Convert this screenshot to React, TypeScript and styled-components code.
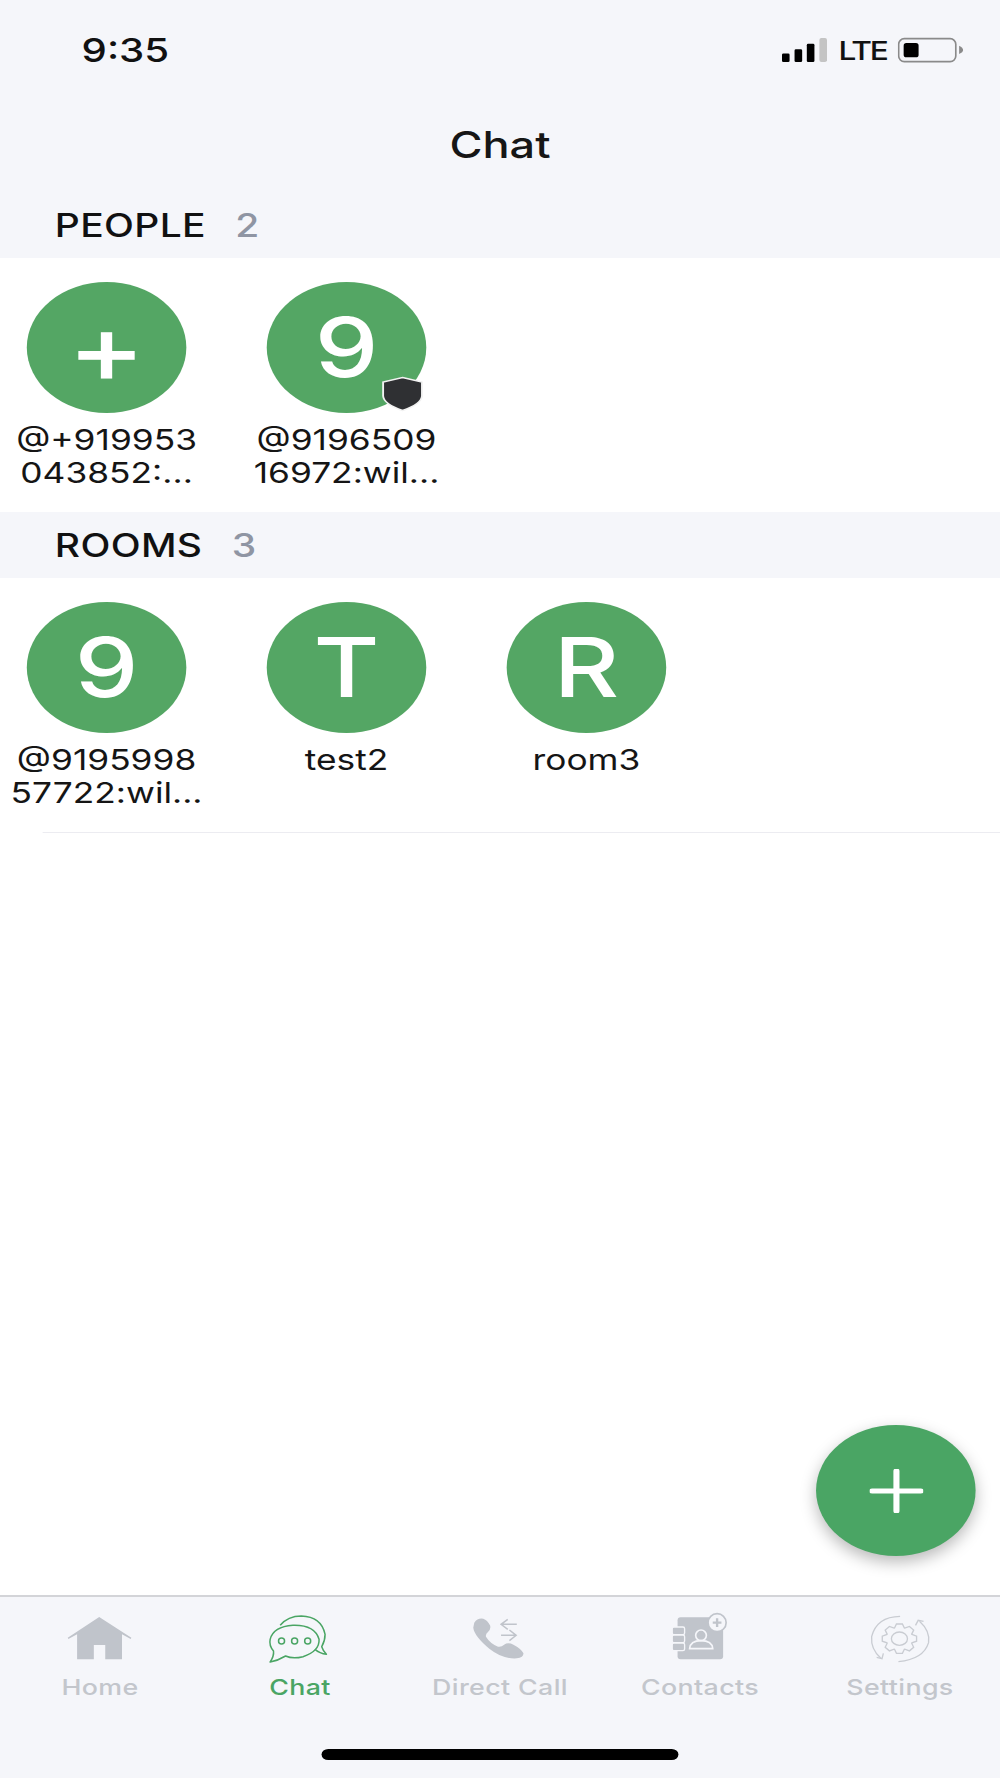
import React from 'react';
import styled, { createGlobalStyle } from 'styled-components';

// The capture is an iPhone screen stretched wider than it is tall: the page is
// laid out at 821px and widened to 1000px so circles and text stretch with it.
const GlobalStyle = createGlobalStyle`
  html, body {
    margin: 0;
    padding: 0;
    overflow: hidden;
    background: #f5f6fa;
  }
`;

const Screen = styled.div`
  width: 821px;
  height: 1778px;
  display: flex;
  flex-direction: column;
  transform: scaleX(1.218);
  transform-origin: 0 0;
  background: #f5f6fa;
  color: #111;
  font-family: Inter, 'Liberation Sans', sans-serif;
`;

const StatusBar = styled.div`
  height: 96px;
  box-sizing: border-box;
  padding: 4px 30px 0 67px;
  display: flex;
  align-items: center;
  justify-content: space-between;
`;

const Clock = styled.span`
  font-size: 33px;
  font-weight: 500;
`;

const StatusIcons = styled.div`
  display: flex;
  align-items: center;
  gap: 9px;
`;

const Lte = styled.span`
  font-size: 26px;
  font-weight: 500;
  letter-spacing: -1.8px;
`;

const NavBar = styled.h1`
  margin: 0;
  height: 96px;
  display: flex;
  align-items: center;
  justify-content: center;
  font-size: 37px;
  font-weight: 500;
  color: #161616;
`;

const SectionHeader = styled.div`
  height: 66px;
  box-sizing: border-box;
  padding-left: 45px;
  display: flex;
  align-items: center;
  gap: 24px;
  font-size: 32px;
  font-weight: 500;
  letter-spacing: 0.3px;
`;

const Count = styled.span`
  color: #8f95a3;
`;

const Row = styled.div`
  height: 254px;
  box-sizing: border-box;
  padding: 24px 0 0 0;
  display: flex;
  gap: 22px;
  background: #fff;
`;

const Item = styled.div`
  width: 175px;
  display: flex;
  flex-direction: column;
  align-items: center;
`;

const Avatar = styled.div<{ $plus?: boolean }>`
  position: relative;
  width: 131px;
  height: 131px;
  border-radius: 50%;
  background: #54a664;
  color: #fff;
  display: flex;
  align-items: center;
  justify-content: center;
  font-size: ${(p) => (p.$plus ? '96px' : '83px')};
  font-weight: 500;
  line-height: 1;
`;

const ShieldBadge = styled.svg`
  position: absolute;
  right: 2px;
  bottom: 1px;
  width: 35px;
  height: 36px;
`;

const Label = styled.div`
  margin-top: 10px;
  width: 100%;
  text-align: center;
  font-size: 29px;
  line-height: 33px;
  white-space: nowrap;
  color: #151515;
`;

const Content = styled.main`
  position: relative;
  flex: 1;
  background: #fff;
`;

const Separator = styled.div`
  margin-left: 35px;
  border-top: 1px solid #ececf1;
`;

const Fab = styled.button`
  position: absolute;
  right: 20px;
  bottom: 39px;
  width: 131px;
  height: 131px;
  padding: 0;
  border: none;
  border-radius: 50%;
  background: #4aa564;
  box-shadow: 0 6px 14px rgba(0, 0, 0, 0.28);
  display: flex;
  align-items: center;
  justify-content: center;
`;

const TabBar = styled.nav`
  height: 183px;
  box-sizing: border-box;
  padding-top: 9px;
  border-top: 2px solid #d3d4d8;
  display: grid;
  grid-template-columns: repeat(5, 1fr);
  align-content: start;
  position: relative;
`;

const Tab = styled.div<{ $active?: boolean }>`
  display: flex;
  flex-direction: column;
  align-items: center;
  color: ${(p) => (p.$active ? '#4aa564' : '#c3c6cc')};
  font-size: 22px;
  line-height: 26px;
  font-weight: 500;
  letter-spacing: 0.3px;
`;

const TabIcon = styled.svg`
  width: 66px;
  height: 65px;
  margin-bottom: 3px;
`;

const HomeIndicator = styled.div`
  position: absolute;
  left: 264px;
  bottom: 18px;
  width: 293px;
  height: 11px;
  border-radius: 6px;
  background: #000;
`;

const GREY = '#c0c4cb';
const GREEN = '#4aa564';

// gear outline for the settings tab, teeth sit on an ellipse around the hub
const gearPath = (() => {
  const cx = 118;
  const cy = 98;
  const pts: string[] = [];
  for (let i = 0; i < 8; i++) {
    const a = (i * Math.PI) / 4;
    const step = Math.PI / 20;
    [
      [a - step * 2.4, 40],
      [a - step * 1.1, 52],
      [a + step * 1.1, 52],
      [a + step * 2.4, 40],
    ].forEach(([t, r]) => {
      pts.push(`${(cx + Math.cos(t) * r).toFixed(1)} ${(cy + Math.sin(t) * r * 0.86).toFixed(1)}`);
    });
  }
  return `M${pts.join(' L')} Z`;
})();

const HomeGlyph = () => (
  <TabIcon viewBox="0 0 240 195" preserveAspectRatio="none">
    <path
      fill={GREY}
      d="M118 33 L214 95 L212 99 L186 85 L186 160 L136 160 L136 117 L102 117 L102 160 L52 160 L52 85 L26 99 L24 95 Z"
    />
  </TabIcon>
);

const ChatGlyph = () => (
  <TabIcon viewBox="0 0 240 195" preserveAspectRatio="none">
    <g fill="none" stroke={GREEN} strokeWidth="4.5" strokeLinejoin="round">
      <path d="M32 168 Q44 150 42 135 Q28 118 32 100 Q42 62 100 58 Q165 56 178 100 Q180 135 130 152 Q100 160 78 150 Q55 164 32 168 Z" />
      <path d="M62 58 Q85 30 125 30 Q185 32 196 85 Q196 105 186 122 Q190 135 200 145 Q180 142 166 130" />
      <circle cx="66" cy="105" r="9" />
      <circle cx="105" cy="105" r="9" />
      <circle cx="144" cy="105" r="9" />
    </g>
  </TabIcon>
);

const CallGlyph = () => (
  <TabIcon viewBox="0 0 240 195" preserveAspectRatio="none">
    <path
      fill={GREY}
      d="M45 50 Q55 35 72 38 Q84 42 92 58 Q96 68 86 78 Q78 84 80 92 Q92 112 116 122 Q126 124 134 116 Q146 108 162 116 Q185 128 192 142 Q192 155 172 157 Q130 160 90 128 Q45 90 42 65 Z"
    />
    <g fill="none" stroke={GREY} strokeWidth="4.5">
      <path d="M172 55 L125 55 M145 40 L125 55 L145 70" />
      <path d="M125 88 L170 88 M150 72 L170 88 L150 104" />
    </g>
  </TabIcon>
);

const ContactsGlyph = () => (
  <TabIcon viewBox="0 0 240 195" preserveAspectRatio="none">
    <rect x="52" y="34" width="136" height="126" rx="9" fill={GREY} />
    <g fill={GREY} stroke="#f5f6fa" strokeWidth="4">
      <rect x="36" y="63" width="37" height="23" rx="5" />
      <rect x="36" y="87" width="37" height="23" rx="5" />
      <rect x="36" y="111" width="37" height="23" rx="5" />
    </g>
    <g fill="none" stroke="#f5f6fa" strokeWidth="5">
      <circle cx="122" cy="88" r="16" />
      <path d="M88 128 Q90 104 122 104 Q155 104 157 128 Z" />
    </g>
    <circle cx="170" cy="50" r="27" fill="#f5f6fa" stroke={GREY} strokeWidth="5" />
    <path d="M170 37 L170 63 M157 50 L183 50" stroke={GREY} strokeWidth="7" />
  </TabIcon>
);

const SettingsGlyph = () => (
  <TabIcon viewBox="0 0 240 195" preserveAspectRatio="none">
    <g fill="none" stroke="#c9ccd2" strokeWidth="4">
      <path d={gearPath} />
      <ellipse cx="118" cy="98" rx="24" ry="20" />
      <path d="M120 31 Q50 32 35 92 Q32 130 62 156" />
      <path d="M50 154 L66 158 L70 142" />
      <path d="M178 46 Q210 75 205 110 Q190 160 115 167" />
      <path d="M166 58 L174 43 L190 46" />
    </g>
  </TabIcon>
);

const tabs = [
  { label: 'Home', icon: <HomeGlyph /> },
  { label: 'Chat', icon: <ChatGlyph />, active: true },
  { label: 'Direct Call', icon: <CallGlyph /> },
  { label: 'Contacts', icon: <ContactsGlyph /> },
  { label: 'Settings', icon: <SettingsGlyph /> },
];

const people = [
  { initial: '+', lines: ['@+919953', '043852:...'] },
  { initial: '9', lines: ['@9196509', '16972:wil...'], verified: true },
];

const rooms = [
  { initial: '9', lines: ['@9195998', '57722:wil...'] },
  { initial: 'T', lines: ['test2'] },
  { initial: 'R', lines: ['room3'] },
];

type Entry = { initial: string; lines: string[]; verified?: boolean };

const EntryItem: React.FC<{ entry: Entry }> = ({ entry }) => (
  <Item>
    <Avatar $plus={entry.initial === '+'}>
      {entry.initial}
      {entry.verified && (
        <ShieldBadge viewBox="0 0 34 36" preserveAspectRatio="none">
          <path
            d="M17 1.5 L32.5 6 L32.5 20 Q32 28 17 34.5 Q2 28 1.5 20 L1.5 6 Z"
            fill="#2f3033"
            stroke="#f2f2f2"
            strokeWidth="1.5"
          />
        </ShieldBadge>
      )}
    </Avatar>
    <Label>
      {entry.lines.map((line) => (
        <div key={line}>{line}</div>
      ))}
    </Label>
  </Item>
);

const App: React.FC = () => (
  <>
    <GlobalStyle />
    <Screen>
      <StatusBar>
        <Clock>9:35</Clock>
        <StatusIcons>
          <svg width="37" height="24" viewBox="132 55 136 70" preserveAspectRatio="none">
            <rect x="132" y="100" width="23" height="25" rx="4" fill="#000" />
            <rect x="170" y="88" width="23" height="37" rx="4" fill="#000" />
            <rect x="207" y="72" width="23" height="53" rx="4" fill="#000" />
            <rect x="245" y="55" width="23" height="70" rx="6" fill="#c4c4c4" />
          </svg>
          <Lte>LTE</Lte>
          <svg width="54" height="26" viewBox="470 52 198 78" preserveAspectRatio="none">
            <rect x="473" y="57" width="172" height="69" rx="17" fill="none" stroke="#8a8a8a" strokeWidth="5" />
            <rect x="488" y="70" width="45" height="43" rx="8" fill="#000" />
            <path d="M655 78 Q667 84 667 91 Q667 98 655 103 Z" fill="#8a8a8a" />
          </svg>
        </StatusIcons>
      </StatusBar>
      <NavBar>Chat</NavBar>
      <SectionHeader>
        PEOPLE <Count>2</Count>
      </SectionHeader>
      <Row>
        {people.map((p) => (
          <EntryItem key={p.lines[0]} entry={p} />
        ))}
      </Row>
      <SectionHeader>
        ROOMS <Count>3</Count>
      </SectionHeader>
      <Content>
        <Row>
          {rooms.map((r) => (
            <EntryItem key={r.lines[0]} entry={r} />
          ))}
        </Row>
        <Separator />
        <Fab aria-label="New chat">
          <svg width="44" height="44" viewBox="0 0 44 44">
            <path d="M22 2 L22 42 M2 22 L42 22" stroke="#fff" strokeWidth="5" strokeLinecap="round" />
          </svg>
        </Fab>
      </Content>
      <TabBar>
        {tabs.map((t) => (
          <Tab key={t.label} $active={t.active}>
            {t.icon}
            {t.label}
          </Tab>
        ))}
        <HomeIndicator />
      </TabBar>
    </Screen>
  </>
);

export default App;
